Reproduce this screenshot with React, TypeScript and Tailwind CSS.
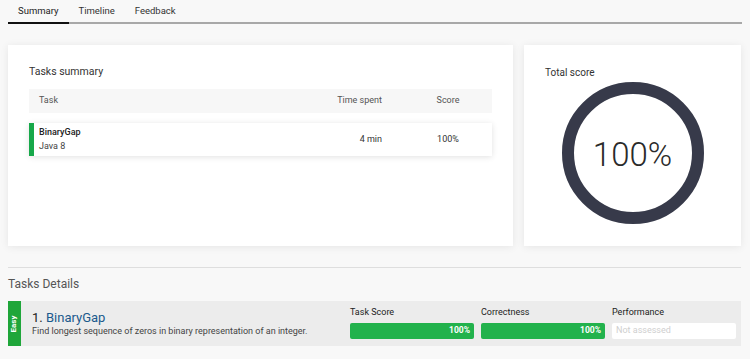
import React from 'react'

const tabs = ['Summary', 'Timeline', 'Feedback']

const ScoreRing = ({ value }: { value: number }) => {
  const r = 65
  return (
    <div className="relative w-[142px] h-[142px]">
      <svg width="142" height="142" viewBox="0 0 142 142">
        <circle cx="71" cy="71" r={r} fill="none" stroke="#e5e5e5" strokeWidth="12" />
        <circle
          cx="71"
          cy="71"
          r={r}
          fill="none"
          stroke="#373a4a"
          strokeWidth="12"
          strokeDasharray={`${(2 * Math.PI * r * value) / 100} ${2 * Math.PI * r}`}
          transform="rotate(-90 71 71)"
        />
      </svg>
      <div className="absolute inset-0 flex items-center justify-center text-[33px] font-light text-[#2a2a2a] pt-[4px]">
        {value}%
      </div>
    </div>
  )
}

const Bar = ({ label, value }: { label: string; value: number | null }) => (
  <div className="w-[124px]">
    <div className="text-[9px] text-[#222] leading-none mb-[6px]">{label}</div>
    {value === null ? (
      <div className="h-[16px] rounded-[2px] bg-white flex items-center px-[4px] text-[9px] text-[#cfcfcf]">
        Not assessed
      </div>
    ) : (
      <div className="h-[16px] rounded-[2px] bg-[#e5e5e5] overflow-hidden">
        <div
          className="h-full bg-[#22b24c] flex items-center justify-end pr-[4px] text-[8.5px] font-bold text-white"
          style={{ width: `${value}%` }}
        >
          {value}%
        </div>
      </div>
    )}
  </div>
)

export default function App() {
  return (
    <div className="w-[750px] h-[359px] bg-[#f8f8f8] px-[8px] pt-0 font-['Roboto',sans-serif] overflow-hidden">
      {/* tabs */}
      <div className="flex w-[734px] border-b-2 border-[#a8a8a8] h-[24px]">
        {tabs.map((t, i) => (
          <div
            key={t}
            className={`px-[10px] text-[9.5px] pt-[4px] -mb-[2px] ${
              i === 0 ? 'border-b-2 border-[#111] text-[#222]' : 'text-[#333]'
            }`}
          >
            {t}
          </div>
        ))}
      </div>

      {/* cards */}
      <div className="flex gap-[11px] mt-[21px] w-[733px]">
        <div className="w-[505px] h-[201px] bg-white shadow-[0_1px_8px_rgba(0,0,0,0.08)] pt-[22px] px-[21px]">
          <div className="text-[10.5px] text-[#333] leading-none h-[12px]">Tasks summary</div>
          <div className="mt-[10px] h-[24px] bg-[#f7f7f7] flex items-center text-[9px] text-[#555]">
            <div className="flex-1 pl-[10px]">Task</div>
            <div className="w-[90px] text-right pr-[22px]">Time spent</div>
            <div className="w-[88px] text-center">Score</div>
          </div>
          <div className="mt-[10px] h-[33px] bg-white flex items-center shadow-[0_1px_6px_rgba(0,0,0,0.12)]">
            <div className="w-[5px] h-full bg-[#17a84a]" />
            <div className="flex-1 pl-[5px] leading-none">
              <div className="text-[9px] font-medium text-[#222]">BinaryGap</div>
              <div className="text-[9px] text-[#444] mt-[5px]">Java 8</div>
            </div>
            <div className="w-[90px] text-right pr-[22px] text-[9px] text-[#333]">4 min</div>
            <div className="w-[88px] text-center text-[9px] text-[#333]">100%</div>
          </div>
        </div>

        <div className="w-[217px] h-[201px] bg-white shadow-[0_1px_8px_rgba(0,0,0,0.08)] pt-[23px] px-[21px]">
          <div className="text-[10px] text-[#333] leading-none">Total score</div>
          <div className="flex justify-center mt-[4px]">
            <ScoreRing value={100} />
          </div>
        </div>
      </div>

      {/* details */}
      <div className="mt-[21px] w-[733px] border-t border-[#dedede] pt-[10px]">
        <div className="text-[12px] text-[#555] leading-none">Tasks Details</div>
        <div className="mt-[11px] h-[45px] bg-[#ececec] flex items-center">
          <div className="w-[13px] h-full bg-[#1fa63a] flex items-center justify-center">
            <span className="-rotate-90 text-[8px] font-bold text-white leading-none">Easy</span>
          </div>
          <div className="flex-1 pl-[11px] leading-none">
            <div className="text-[13px] text-[#222]">
              1. <span className="text-[#1b5a8c]">BinaryGap</span>
            </div>
            <div className="text-[9px] text-[#444] mt-[3px]">
              Find longest sequence of zeros in binary representation of an integer.
            </div>
          </div>
          <div className="flex gap-[7px] pr-[5px] -mt-[1px]">
            <Bar label="Task Score" value={100} />
            <Bar label="Correctness" value={100} />
            <Bar label="Performance" value={null} />
          </div>
        </div>
      </div>
    </div>
  )
}
